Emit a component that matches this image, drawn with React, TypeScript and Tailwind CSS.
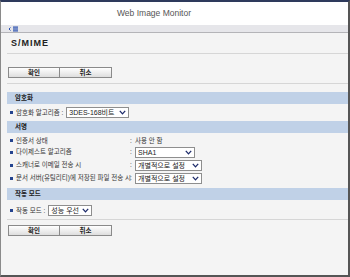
import React from "react";

const Chevron = () => (
  <svg width="7" height="5" viewBox="0 0 7 5" className="shrink-0">
    <path d="M0.8 0.9 L3.5 3.9 L6.2 0.9" fill="none" stroke="#1c2a6a" strokeWidth="1.3" />
  </svg>
);

const Select = ({ value, w }: { value: string; w: string }) => (
  <div
    className={`flex h-[11px] items-center justify-between border border-[#8e8e8e] bg-white px-[2px] text-[7px] leading-none whitespace-nowrap text-[#222] ${w}`}
  >
    <span>{value}</span>
    <Chevron />
  </div>
);

const Buttons = () => (
  <div className="flex pl-[7px]">
    <div className="flex h-[11px] w-[52px] items-center justify-center border border-[#8a8a8a] bg-linear-to-b from-white to-[#dedede] text-[6.5px] font-bold text-[#222]">
      확인
    </div>
    <div className="-ml-px flex h-[11px] w-[53px] items-center justify-center border border-[#8a8a8a] bg-linear-to-b from-white to-[#dedede] text-[6.5px] font-bold text-[#222]">
      취소
    </div>
  </div>
);

const Bar = ({ title }: { title: string }) => (
  <div className="ml-[6px] flex h-[12px] items-center bg-[#c0d1e7] pl-[8px] text-[6.5px] font-bold text-[#222]">
    {title}
  </div>
);

const Bullet = () => <div className="h-[3px] w-[3px] shrink-0 bg-[#24438f]" />;

const Divider = () => <div className="ml-[6px] h-px bg-[#d6d6d6]" />;

const App: React.FC = () => {
  return (
    <div className="h-[277px] w-[350px] overflow-hidden border-t-2 border-r-2 border-b-2 border-l border-t-[#2e3a5c] border-r-[#555] border-b-[#555] border-l-[#8a8a8a] bg-[#f4f4f4] font-['Liberation_Sans','Noto_Sans_CJK_KR',sans-serif]">
      {/* header */}
      <div className="flex h-[23px] items-center bg-white pl-[116px] text-[8.5px] text-[#555]">
        Web Image Monitor
      </div>
      <div className="flex h-[8px] items-center gap-[2px] border-b border-[#b4b4b8] bg-[#e6e6ea] pl-[7px]">
        <svg width="11" height="6" viewBox="0 0 11 6">
          <path d="M2.5 1.5 L1 3 L2.5 4.5" fill="none" stroke="#2a50b0" strokeWidth="1" />
          <rect x="5" y="0.5" width="5" height="1.2" fill="#2a50b0" />
          <rect x="5" y="2.4" width="5" height="1.2" fill="#2a50b0" />
          <rect x="5" y="4.3" width="5" height="1.2" fill="#2a50b0" />
        </svg>
      </div>

      {/* title */}
      <div className="pt-[5px] pl-[10px] text-[9px] leading-[10px] font-bold tracking-[1px] text-[#222]">S/MIME</div>
      <div className="mt-[5px]">
        <Divider />
      </div>

      <div className="mt-[13px]">
        <Buttons />
      </div>
      <div className="mt-[5px]">
        <Divider />
      </div>

      {/* 암호화 */}
      <div className="mt-[8px]">
        <Bar title="암호화" />
      </div>
      <div className="mt-[3px] flex h-[11px] items-center gap-[3px] pl-[9px] text-[6.5px] text-[#333]">
        <Bullet />
        <span>암호화 알고리즘 :</span>
        <Select value="3DES-168비트" w="w-[63px]" />
      </div>

      {/* 서명 */}
      <div className="mt-[3px]">
        <Bar title="서명" />
      </div>
      <div className="mt-[3px] flex flex-col gap-[1px] text-[6.5px] text-[#333]">
        <div className="grid h-[9px] grid-cols-[120px_5px_1fr] items-center pl-[9px]">
          <div className="flex items-center gap-[3px]">
            <Bullet />
            <span>인증서 상태</span>
          </div>
          <span>:</span>
          <span>사용 안 함</span>
        </div>
        <div className="grid h-[12px] grid-cols-[120px_5px_1fr] items-center pl-[9px]">
          <div className="flex items-center gap-[3px]">
            <Bullet />
            <span>다이제스트 알고리즘</span>
          </div>
          <span>:</span>
          <Select value="SHA1" w="w-[60px]" />
        </div>
        <div className="grid h-[12px] grid-cols-[120px_5px_1fr] items-center pl-[9px]">
          <div className="flex items-center gap-[3px]">
            <Bullet />
            <span>스캐너로 이메일 전송 시</span>
          </div>
          <span>:</span>
          <Select value="개별적으로 설정" w="w-[67px]" />
        </div>
        <div className="grid h-[12px] grid-cols-[120px_5px_1fr] items-center pl-[9px]">
          <div className="flex items-center gap-[3px] whitespace-nowrap">
            <Bullet />
            <span>문서 서버(유틸리티)에 저장된 파일 전송 시</span>
          </div>
          <span>:</span>
          <Select value="개별적으로 설정" w="w-[67px]" />
        </div>
      </div>

      {/* 작동 모드 */}
      <div className="mt-[4px]">
        <Bar title="작동 모드" />
      </div>
      <div className="mt-[5px] flex h-[11px] items-center gap-[3px] pl-[9px] text-[6.5px] text-[#333]">
        <Bullet />
        <span>작동 모드 :</span>
        <Select value="성능 우선" w="w-[44px]" />
      </div>
      <div className="mt-[3px]">
        <Divider />
      </div>
      <div className="mt-[5px]">
        <Buttons />
      </div>
    </div>
  );
};

export default App;
